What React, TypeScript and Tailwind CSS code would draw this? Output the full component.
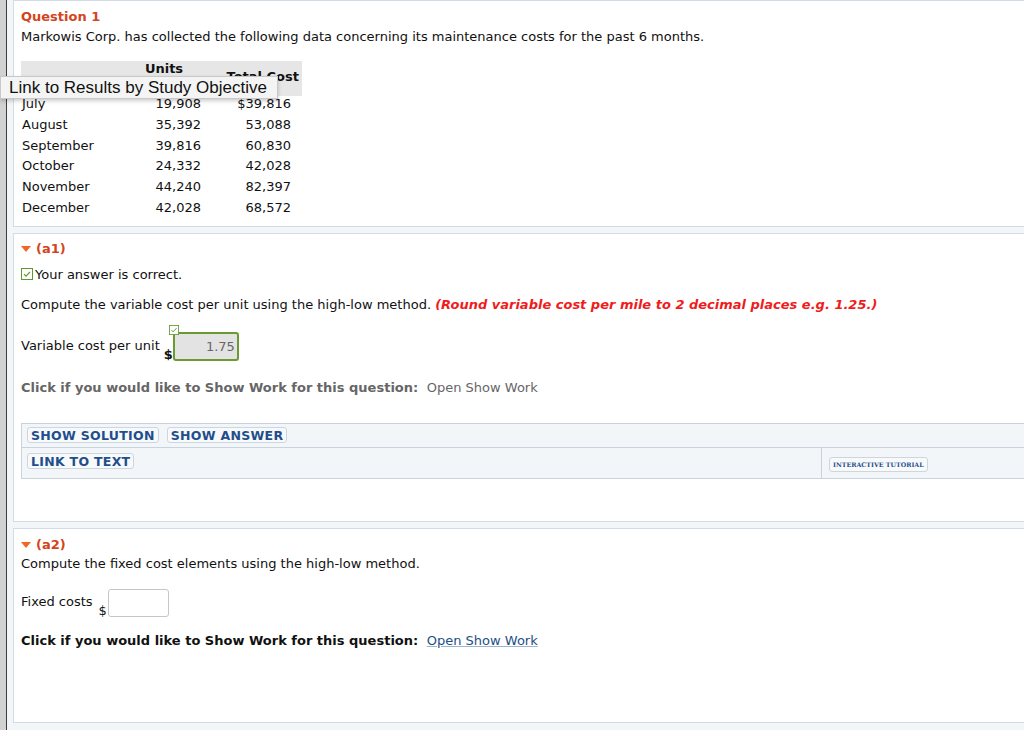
import React from 'react'

const font = { fontFamily: '"DejaVu Sans", Verdana, sans-serif' }

const rows = [
  ['July', '19,908', '$39,816'],
  ['August', '35,392', '53,088'],
  ['September', '39,816', '60,830'],
  ['October', '24,332', '42,028'],
  ['November', '44,240', '82,397'],
  ['December', '42,028', '68,572'],
]

const Triangle = () => (
  <svg width="10" height="8" viewBox="0 0 10 8" className="mr-[5px]">
    <polygon points="0,1 10,1 5,7" fill="#f26522" />
  </svg>
)

const CheckBox = ({ size = 12 }: { size?: number }) => (
  <svg width={size} height={size} viewBox="0 0 12 12">
    <rect x="0.5" y="0.5" width="11" height="11" fill="#fff" stroke="#5d9a2a" />
    <path d="M3 6.2 L5 8.2 L9 3.8" fill="none" stroke="#5d9a2a" strokeWidth="1.2" />
  </svg>
)

const SmallBtn = ({ children }: { children: React.ReactNode }) => (
  <span className="inline-block h-[16px] px-[3px] leading-[15px] rounded-[3px] border border-[#cdd6df] bg-[#f7f9fb] text-[12.5px] font-bold text-[#1f4e8c] tracking-[0.3px]">
    {children}
  </span>
)

export default function App() {
  return (
    <div className="relative flex h-[730px] w-[1024px] overflow-hidden bg-[#f3f6f9] text-[13px] text-[#111]" style={font}>
      <div className="w-[6px] bg-[#d2d2d2]" />
      <div className="w-px bg-[#3c3c3c]" />
      <div className="flex flex-1 flex-col gap-[6px] pl-[6px]">
        {/* Question header + data table */}
        <div className="relative h-[227px] border border-r-0 border-[#d3dce6] bg-white pl-[7px] pt-[6px]">
          <div className="text-[13px] font-bold text-[#d4441c]">Question 1</div>
          <div>Markowis Corp. has collected the following data concerning its maintenance costs for the past 6 months.</div>
          <table className="mt-[15px] w-[281px] table-fixed border-collapse">
            <colgroup>
              <col className="w-[106px]" />
              <col className="w-[82px]" />
              <col className="w-[93px]" />
            </colgroup>
            <thead>
              <tr className="h-[35px] bg-[#e6e6e6] align-top font-bold leading-[16px]">
                <th />
                <th className="pr-[8px] text-center">Units</th>
                <th className="pt-[8px] pr-[3px] text-right">Total Cost</th>
              </tr>
            </thead>
            <tbody>
              {rows.map(r => (
                <tr key={r[0]} className="h-[20.8px] align-top leading-[16px]">
                  <td className="pl-[1px]">{r[0]}</td>
                  <td className="pr-[8px] text-right">{r[1]}</td>
                  <td className="pr-[11px] text-right">{r[2]}</td>
                </tr>
              ))}
            </tbody>
          </table>
        </div>

        {/* Part a1 */}
        <div className="h-[289px] border border-r-0 border-[#d3dce6] bg-white pl-[7px] pt-[5px]">
          <div className="flex items-center font-bold text-[#d4441c]">
            <Triangle />(a1)
          </div>
          <div className="mt-[6px] flex items-center gap-[2px]">
            <CheckBox /> Your answer is correct.
          </div>
          <div className="mt-[11px]">
            Compute the variable cost per unit using the high-low method.{' '}
            <span className="font-bold italic text-[#f01c1c]">(Round variable cost per mile to 2 decimal places e.g. 1.25.)</span>
          </div>
          <div className="mt-[17px] flex items-start">
            <span className="mt-[4px]">Variable cost per unit</span>
            <span className="ml-[4px] mt-[13px] font-bold">$</span>
            <div className="relative">
              <div className="absolute left-[-4px] top-[-7px]">
                <CheckBox size={10} />
              </div>
              <div className="h-[29px] w-[66px] rounded-[3px] border-2 border-[#6b9a32] bg-[#e3e3e3] pr-[2px] pt-[3px] text-right text-[#666]">1.75</div>
            </div>
          </div>
          <div className="mt-[14px] font-bold text-[#666]">
            Click if you would like to Show Work for this question:{' '}
            <span className="ml-[4px] font-normal">Open Show Work</span>
          </div>
          <div className="mt-[25px] border border-r-0 border-[#c9d3dd] bg-[#f3f6f9]">
            <div className="flex h-[24px] items-center gap-[8px] border-b border-[#c9d3dd] pl-[5px]">
              <SmallBtn>SHOW SOLUTION</SmallBtn>
              <SmallBtn>SHOW ANSWER</SmallBtn>
            </div>
            <div className="flex h-[30px]">
              <div className="w-[800px] border-r border-[#c9d3dd] pl-[5px] pt-[4px]">
                <SmallBtn>LINK TO TEXT</SmallBtn>
              </div>
              <div className="pl-[7px] pt-[5px]">
                <span className="inline-block h-[15px] rounded-[3px] border border-[#cdd6df] bg-[#f7f9fb] px-[3px] text-[6.3px] font-bold leading-[13px] text-[#1f4e8c]" style={{ fontFamily: '"DejaVu Serif", serif' }}>
                  INTERACTIVE TUTORIAL
                </span>
              </div>
            </div>
          </div>
        </div>

        {/* Part a2 */}
        <div className="h-[195px] border border-r-0 border-[#d3dce6] bg-white pl-[7px] pt-[6px]">
          <div className="flex items-center font-bold text-[#d4441c]">
            <Triangle />(a2)
          </div>
          <div className="-mt-[1px]">Compute the fixed cost elements using the high-low method.</div>
          <div className="mt-[16px] flex items-start">
            <span className="mt-[3px]">Fixed costs</span>
            <span className="ml-[6px] mt-[12px]">$</span>
            <div className="ml-[1px] h-[28px] w-[61px] rounded-[3px] border border-[#c6c6c6] bg-white" />
          </div>
          <div className="mt-[10px] font-bold">
            Click if you would like to Show Work for this question:{' '}
            <span className="ml-[4px] font-normal text-[#1d4f86] underline decoration-[#9db6cf]">Open Show Work</span>
          </div>
        </div>
      </div>

      {/* Hover tooltip over table header */}
      <div
        className="absolute left-0 top-[76px] h-[23px] w-[278px] border border-[#c8c8c8] bg-[#f4f4f4] pl-[8px] text-[17px] leading-[21px] text-[#111] shadow-[0_2px_4px_rgba(0,0,0,0.2)]"
        style={{ fontFamily: '"Liberation Sans", Arial, sans-serif' }}
      >
        Link to Results by Study Objective
      </div>
    </div>
  )
}
